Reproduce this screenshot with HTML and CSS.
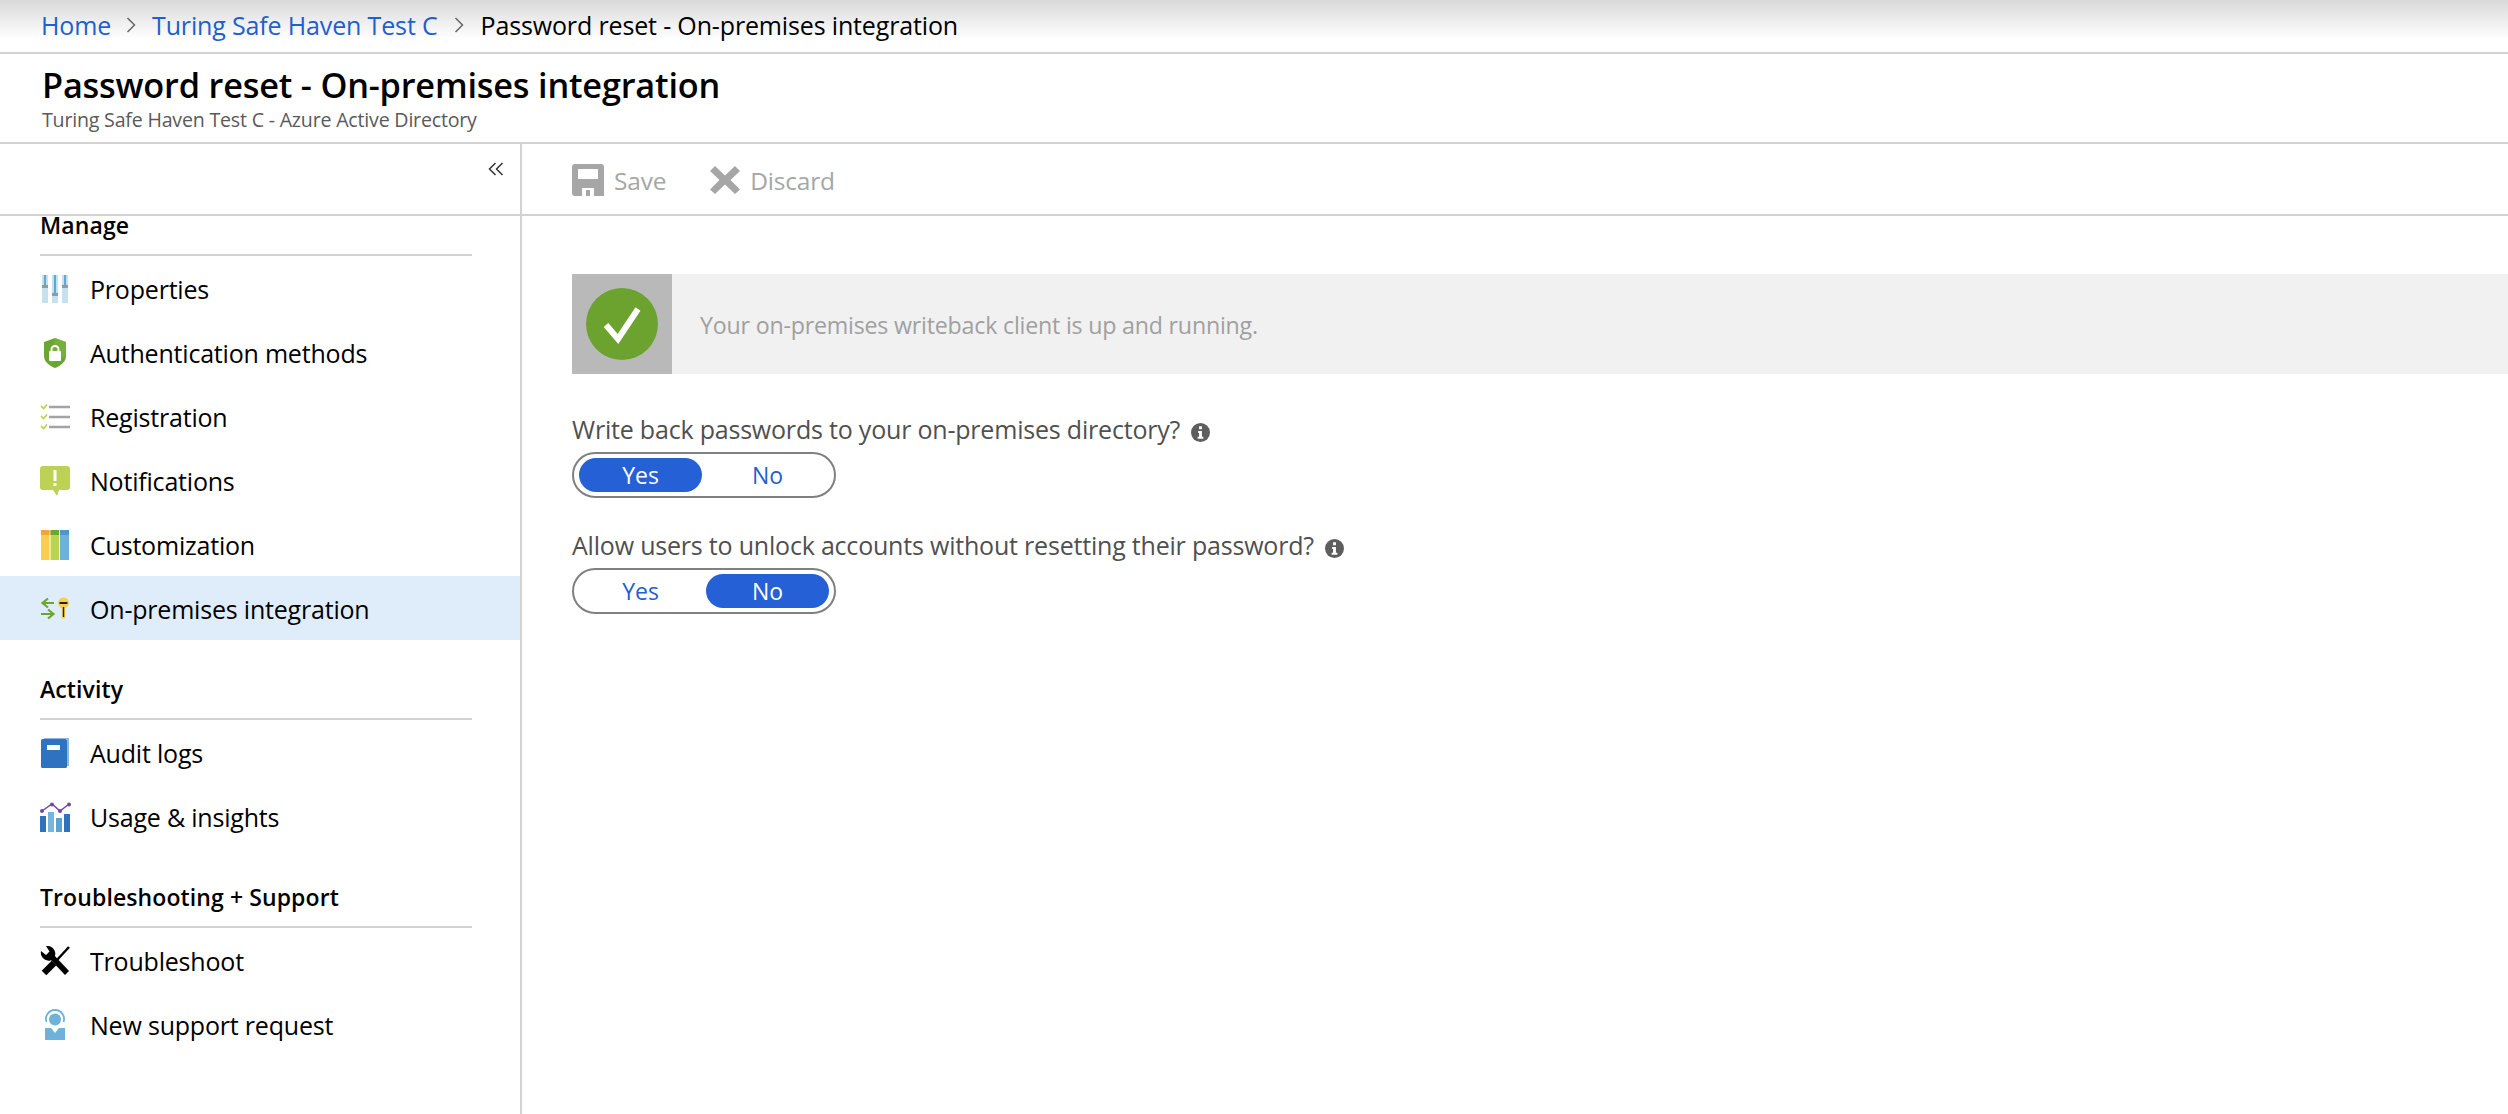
FILE: index.html
```html
<!DOCTYPE html>
<html>
<head>
<title>Password reset - On-premises integration</title>
<meta charset="utf-8">
<link rel="stylesheet" href="styles.css">
</head>
<body>

<nav class="crumbs">
    <a href="#">Home</a>
    <svg class="crumb-sep" viewBox="0 0 10 18"><path d="M1.5 2l7 7-7 7" fill="none" stroke="#666" stroke-width="1.5"/></svg>
    <a href="#">Turing Safe Haven Test C</a>
    <svg class="crumb-sep" viewBox="0 0 10 18"><path d="M1.5 2l7 7-7 7" fill="none" stroke="#666" stroke-width="1.5"/></svg>
    <span>Password reset - On-premises integration</span>
</nav>

<header class="head">
    <h1>Password reset - On-premises integration</h1>
    <p>Turing Safe Haven Test C - Azure Active Directory</p>
</header>

<div class="wrap">
    <aside class="side">
        <div class="collapse">
            <svg viewBox="0 0 16 14" width="16" height="14"><path d="M7.5 1L1.5 7l6 6M14.5 1l-6 6 6 6" fill="none" stroke="#333" stroke-width="1.5"/></svg>
        </div>

        <h2>Manage</h2>
        <a class="row" href="#">
            <svg viewBox="0 0 32 32"><path d="M3 2h6v28H3zM13 2h6v28h-6zM23 2h6v28h-6z" fill="#c6e0ee"/><path d="M5 2h2v11H5zM15 2h2v19h-2zM25 2h2v11h-2z" fill="#59a9d8"/><path d="M3 12h6v3H3zM13 20h6v3h-6zM23 12h6v3h-6z" fill="#8f9aa3"/></svg>
            Properties
        </a>
        <a class="row" href="#">
            <svg viewBox="0 0 32 32"><path d="M16 1l11 4v14c0 6-6 10-11 12C11 29 5 25 5 19V5z" fill="#6ca632"/><path d="M16 1l11 4v14L11 27 16 1z" fill="#7db53f" opacity=".6"/><rect x="10" y="14" width="12" height="10" rx="1" fill="#fff"/><path d="M12.5 14.5v-2a3.5 3.5 0 0 1 7 0v2" fill="none" stroke="#fff" stroke-width="2"/></svg>
            Authentication methods
        </a>
        <a class="row" href="#">
            <svg viewBox="0 0 32 32"><path d="M10 6h21M10 16h21M10 26h21" stroke="#a3a3a3" stroke-width="2.6" fill="none"/><path d="M2 5l2.5 2.5L8 3.500M2 15l2.5 2.500L8 13.500M2 25l2.5 2.5L8 23.500" stroke="#b8d14f" stroke-width="1.700" fill="none"/></svg>
            Registration
        </a>
        <a class="row" href="#">
            <svg viewBox="0 0 32 32"><path d="M4 1h24a3 3 0 0 1 3 3v18a3 3 0 0 1-3 3h-8l-2 6-4-6H4a3 3 0 0 1-3-3V4a3 3 0 0 1 3-3z" fill="#bdd155"/><path d="M14.500 5h3v11h-3zM14.500 18h3v3h-3z" fill="#fff"/></svg>
            Notifications
        </a>
        <a class="row" href="#">
            <svg viewBox="0 0 32 32"><path d="M2 1h8.500v30H2z" fill="#f8cf4c"/><path d="M11.500 1H20v30h-8.500z" fill="#bcd253"/><path d="M21 1h9v30h-9z" fill="#6fb2d9"/><path d="M2 1h8.500v5H2z" fill="#f2a33c"/><path d="M11.500 1H20v5h-8.500z" fill="#6ca632"/><path d="M21 1h9v5h-9z" fill="#4f97c9"/></svg>
            Customization
        </a>
        <a class="row active" href="#">
            <svg viewBox="0 0 32 32"><path d="M15 10H4M9 5.500L3.500 10 9 14.500M2 21h12M9 16.500l5.500 4.500L9 25.500" fill="none" stroke="#6ca632" stroke-width="2.200"/><circle cx="24.500" cy="10" r="5.500" fill="#f8cf4c"/><path d="M22.800 14h3.400v11.500h-3.400z" fill="#f8cf4c"/><path d="M20.500 9h8v2h-8zM23.800 14h1.400v10h-1.400z" fill="#222"/></svg>
            On-premises integration
        </a>

        <h2>Activity</h2>
        <a class="row" href="#">
            <svg viewBox="0 0 32 32"><path d="M5 1h25v28h-2V2H5z" fill="#8fb7de"/><rect x="2" y="2" width="26" height="29" rx="1.500" fill="#2f72c0"/><rect x="8" y="8" width="13" height="5" rx=".5" fill="#fff"/></svg>
            Audit logs
        </a>
        <a class="row" href="#">
            <svg viewBox="0 0 32 32"><path d="M1 15h6v16H1zM25 13h6v18h-6z" fill="#2f72c0"/><path d="M9 11h6v20H9z" fill="#76b5dc"/><path d="M17 17h6v14h-6z" fill="#5aa2cf"/><path d="M3 10l10-7 8 7 9-7" fill="none" stroke="#74489d" stroke-width="1.500"/><g fill="#74489d"><circle cx="3" cy="10" r="2"/><circle cx="13" cy="3.500" r="2"/><circle cx="21" cy="10" r="2"/><circle cx="30" cy="3.500" r="2"/></g></svg>
            Usage &amp; insights
        </a>

        <h2>Troubleshooting + Support</h2>
        <a class="row" href="#">
            <svg viewBox="0 0 32 32"><path d="M30 2L18 15" fill="none" stroke="#000" stroke-width="2.500"/><path d="M15 18L5 28" fill="none" stroke="#000" stroke-width="6.500"/><path d="M12 11l16 17" fill="none" stroke="#000" stroke-width="5.500"/><path d="M7 1a8 8 0 0 1 9 10l-4.500 4.500A8 8 0 0 1 2 6l5 4 3.500-3.500z" fill="#000"/></svg>
            Troubleshoot
        </a>
        <a class="row" href="#">
            <svg viewBox="0 0 32 32"><path d="M6 19h6l4 5 4-5h6v12H6z" fill="#6fb2d9"/><circle cx="16" cy="10.500" r="6" fill="#6fb2d9"/><path d="M7.500 13a9 9 0 0 1 8.500-12 9 9 0 0 1 8.500 12" fill="none" stroke="#6fb2d9" stroke-width="1.800"/></svg>
            New support request
        </a>
    </aside>

    <main class="main">
        <div class="toolbar">
            <span class="tool">
                <svg viewBox="0 0 32 32" width="32" height="32"><path d="M3 0h26a3 3 0 0 1 3 3v29H22V24H10v8H3a3 3 0 0 1-3-3V3a3 3 0 0 1 3-3zM6 5v10h20V5z" fill="#a6a6a6" fill-rule="evenodd"/><path d="M14 26h4v6h-4z" fill="#a6a6a6"/></svg>
                Save
            </span>
            <span class="tool">
                <svg viewBox="0 0 30 30" width="30" height="30"><path d="M5 1l10 9.500L25 1l5 5-9.500 9L30 24.500 25 29l-10-9.500L5 29l-5-4.500L9.500 15 0 6z" fill="#a6a6a6"/></svg>
                Discard
            </span>
        </div>

        <div class="content">
            <div class="banner">
                <div class="banner-icon">
                    <svg viewBox="0 0 72 72" width="72" height="72"><circle cx="36" cy="36" r="36" fill="#6ca32f"/><path d="M20 37l12 14 20-30" fill="none" stroke="#fff" stroke-width="6"/></svg>
                </div>
                <div class="banner-text">Your on-premises writeback client is up and running.</div>
            </div>

            <div class="field">
                <label>Write back passwords to your on-premises directory?
                    <svg class="info" viewBox="0 0 20 20"><circle cx="10" cy="10" r="10" fill="#5e5e5e"/><path d="M8.500 3.500h3v3h-3zM7.500 8.500h4v6h1.500v2H7v-2h1.500v-4h-1z" fill="#fff"/></svg>
                </label>
                <div class="toggle">
                    <span class="opt on">Yes</span>
                    <span class="opt">No</span>
                </div>
            </div>

            <div class="field">
                <label>Allow users to unlock accounts without resetting their password?
                    <svg class="info" viewBox="0 0 20 20"><circle cx="10" cy="10" r="10" fill="#5e5e5e"/><path d="M8.500 3.500h3v3h-3zM7.500 8.500h4v6h1.500v2H7v-2h1.500v-4h-1z" fill="#fff"/></svg>
                </label>
                <div class="toggle">
                    <span class="opt">Yes</span>
                    <span class="opt on">No</span>
                </div>
            </div>
        </div>
    </main>
</div>

</body>
</html>
```

FILE: styles.css
```css
*{margin:0;padding:0;box-sizing:border-box;}
html,body{height:100%;overflow:hidden;}
body{display:flex;flex-direction:column;height:1114px;background:#fff;color:#000;font-family:"Open Sans","Noto Sans","Liberation Sans",sans-serif;font-size:24px;}
a{color:inherit;text-decoration:none;}

.crumbs{height:54px;flex:none;display:flex;align-items:center;padding:0 0 2px 41px;background:linear-gradient(#d9d9d9,#fff 75%);border-bottom:2px solid #d2d2d2;font-size:25px;letter-spacing:-.15px;}
.crumbs a{color:#1f5fcf;}
.crumb-sep{width:10px;height:18px;margin:0 17px 0 16px;}
.crumb-sep:first-of-type{margin-left:15px;margin-right:16px;}

.head{height:90px;flex:none;padding:8px 0 0 42px;border-bottom:2px solid #d2d2d2;}
.head h1{font-size:34.3px;font-weight:600;line-height:46px;letter-spacing:-.2px;}
.head p{font-size:19.6px;line-height:24px;color:#5a5a5a;letter-spacing:-.2px;}

.wrap{flex:1;display:flex;min-height:0;}
.side{width:522px;flex:none;border-right:2px solid #d2d2d2;}
.collapse{height:32px;display:flex;justify-content:flex-end;align-items:flex-end;padding:0 16px 0 0;}
.side h2{height:56px;margin:24px 48px 0 40px;padding-top:9px;border-bottom:2px solid #d2d2d2;font-size:23px;font-weight:600;line-height:32px;letter-spacing:.1px;}
.row{height:64px;display:flex;align-items:center;gap:19px;padding:2px 0 0 39px;font-size:25px;letter-spacing:-.2px;}
.row svg{width:32px;height:32px;flex:none;}
.row.active{background:#dfedfb;}

.main{flex:1;min-width:0;}
.toolbar{height:72px;display:flex;align-items:center;padding:3px 0 0 572px;margin-left:-522px;border-bottom:2px solid #d2d2d2;color:#a6a6a6;font-size:24.5px;letter-spacing:-.2px;}
.tool{display:flex;align-items:center;gap:10px;margin-right:44px;line-height:36px;}
.tool svg{margin-top:-2px;}
.content{padding:58px 0 0 50px;}
.banner{height:100px;display:flex;background:#f1f1f1;}
.banner-icon{width:100px;flex:none;display:flex;align-items:center;justify-content:center;background:#b9b9b9;}
.banner-text{padding:35px 0 0 28px;color:#a0a0a0;font-size:23.2px;line-height:32px;letter-spacing:-.2px;}

.field{margin-top:29px;}
.banner + .field{margin-top:37px;}
.field label{display:flex;align-items:center;gap:11px;height:36px;margin-bottom:5px;color:#505050;font-size:25px;letter-spacing:-.2px;}
.info{width:19px;height:19px;margin-top:6px;}
.toggle{width:264px;height:46px;display:flex;gap:4px;padding:4px 5px;border:2px solid #808080;border-radius:23px;}
.opt{flex:1;display:flex;align-items:center;justify-content:center;border-radius:17px;color:#1f5fcf;font-size:23px;}
.opt.on{background:#2560d6;color:#fff;}
```
